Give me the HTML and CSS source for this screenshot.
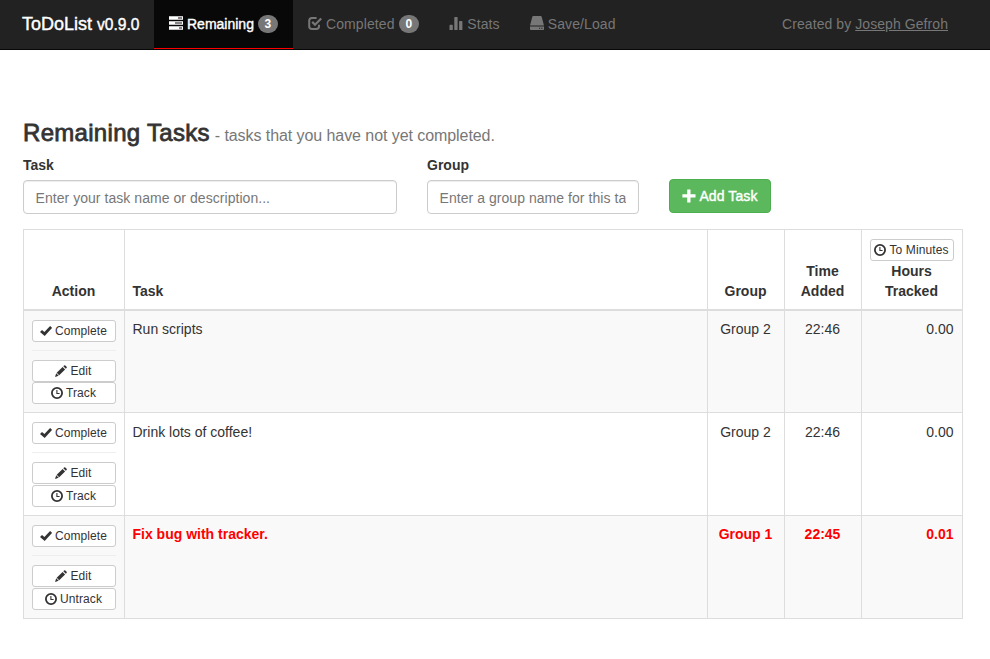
FILE: index.html
```html
<!DOCTYPE html>
<html lang="en">
<head>
<meta charset="utf-8">
<title>ToDoList</title>
<link rel="stylesheet" href="styles.css">
</head>
<body>
<svg class="defs" width="0" height="0" aria-hidden="true">
  <symbol id="tasks" viewBox="0 0 14 14"><path fill-rule="evenodd" d="M0 .3h14v3.400H0zM9 1.500v1h4v-1zM0 5.300h14v3.400H0zM6 6.500v1h7v-1zM0 10.300h14v3.400H0zM10 11.500v1h3v-1z"/></symbol>
  <symbol id="check" viewBox="0 0 14 14"><path fill="none" stroke="currentColor" stroke-width="2" d="M8.600 2H4Q1.200 2 1.200 4.800V10.200Q1.200 13 4 13H8.200Q11 13 11 10.200V8.800"/><path fill="none" stroke="currentColor" stroke-width="2.200" d="M4.200 5.900L7 8.700L13.200 2.500"/></symbol>
  <symbol id="stats" viewBox="0 0 14 14"><path d="M.5 9.500q0-.7.7-.7h1.900q.7 0 .7.7V14H.5zM5.300 1.700q0-.7.7-.7h1.900q.7 0 .7.7V14H5.300zM10.100 5.700q0-.7.7-.7h1.900q.7 0 .7.7V14h-3.300z"/></symbol>
  <symbol id="drive" viewBox="0 0 14 14"><path fill-rule="evenodd" d="M3.200 0h7.600q.6 0 .8.600L14 9.500H0L2.400.6Q2.600 0 3.200 0zM0 10.500h14v2.800q0 .7-.7.7H.7Q0 14 0 13.300zM9 11.700v1.100h1.200v-1.100zM11.300 11.700v1.100h1.200v-1.100z"/></symbol>
  <symbol id="plus" viewBox="0 0 14 14"><path d="M5.200.5h3.300v4.800h5v3.300h-5v4.900H5.200V8.600H.4V5.300h4.800z"/></symbol>
  <symbol id="ok" viewBox="0 0 12 12"><path d="M0 6.900L2 4.900L4.400 6.900L10.100.9L12.100 2.800L4.700 11z"/></symbol>
  <symbol id="pencil" viewBox="0 0 12 12"><path d="M9.100.4Q9.700-.1 10.300.4L11.600 1.700Q12.100 2.300 11.600 2.900L10.800 3.700L8.300 1.200zM7.600 1.900L10.100 4.400L4.200 10.200L1.700 7.700zM1.200 8.300L3.700 10.800L0 12z"/></symbol>
  <symbol id="clock" viewBox="0 0 12 12"><circle cx="6" cy="6" r="5.100" fill="none" stroke="currentColor" stroke-width="1.800"/><path fill="none" stroke="currentColor" stroke-width="1.100" d="M5.900 3v3.500h2.700"/></symbol>
</svg>
<nav class="navbar">
  <a class="brand">ToDoList <span class="version">v0.9.0</span></a>
  <a class="tab active"><svg><use href="#tasks"/></svg><span class="label">Remaining</span><span class="badge">3</span></a>
  <a class="tab"><svg><use href="#check"/></svg><span class="label">Completed</span><span class="badge">0</span></a>
  <a class="tab"><svg><use href="#stats"/></svg><span class="label">Stats</span></a>
  <a class="tab"><svg><use href="#drive"/></svg><span class="label">Save/Load</span></a>
  <p class="credit">Created by <a>Joseph Gefroh</a></p>
</nav>
<main>
  <h1>Remaining Tasks <small>- tasks that you have not yet completed.</small></h1>
  <form class="add-form">
    <div class="field task-field"><label for="t">Task</label><input id="t" placeholder="Enter your task name or description..."></div>
    <div class="field group-field"><label for="g">Group</label><input id="g" placeholder="Enter a group name for this task..."></div>
    <button type="button" class="add"><svg><use href="#plus"/></svg><span>Add Task</span></button>
  </form>
  <table>
    <colgroup><col class="c-action"><col><col class="c-small"><col class="c-small"><col class="c-action"></colgroup>
    <thead>
      <tr><th>Action</th><th class="left">Task</th><th>Group</th><th>Time Added</th><th><button type="button" class="xs"><svg><use href="#clock"/></svg><span>To Minutes</span></button>Hours Tracked</th></tr>
    </thead>
    <tbody>
      <tr class="odd first">
        <td><div class="actions"><button type="button" class="xs"><svg><use href="#ok"/></svg><span>Complete</span></button><hr><button type="button" class="xs"><svg><use href="#pencil"/></svg><span>Edit</span></button><button type="button" class="xs"><svg><use href="#clock"/></svg><span>Track</span></button></div></td>
        <td class="left">Run scripts</td><td>Group 2</td><td>22:46</td><td class="right">0.00</td>
      </tr>
      <tr class="second">
        <td><div class="actions"><button type="button" class="xs"><svg><use href="#ok"/></svg><span>Complete</span></button><hr><button type="button" class="xs"><svg><use href="#pencil"/></svg><span>Edit</span></button><button type="button" class="xs"><svg><use href="#clock"/></svg><span>Track</span></button></div></td>
        <td class="left">Drink lots of coffee!</td><td>Group 2</td><td>22:46</td><td class="right">0.00</td>
      </tr>
      <tr class="odd tracking">
        <td><div class="actions"><button type="button" class="xs"><svg><use href="#ok"/></svg><span>Complete</span></button><hr><button type="button" class="xs"><svg><use href="#pencil"/></svg><span>Edit</span></button><button type="button" class="xs"><svg><use href="#clock"/></svg><span>Untrack</span></button></div></td>
        <td class="left">Fix bug with tracker.</td><td>Group 1</td><td>22:45</td><td class="right">0.01</td>
      </tr>
    </tbody>
  </table>
</main>
</body>
</html>
```
FILE: styles.css
```css
* { box-sizing: border-box; }
body {
  margin: 0;
  background: #fff;
  color: #333;
  font: 14px/20px "Liberation Sans", Arial, sans-serif;
}
svg { fill: currentColor; flex: none; }
.defs { position: absolute; }

.navbar {
  display: flex;
  height: 50px;
  padding-left: 22px;
  padding-right: 42px;
  background: #222;
  border-bottom: 1px solid #080808;
  color: #777;
}
.brand {
  width: 132px;
  padding-top: 14px;
  color: #fff;
  font-size: 18px;
  white-space: nowrap;
  -webkit-text-stroke: .4px;
}
.version { font-size: 15.6px; }
.tab {
  display: flex;
  align-items: flex-start;
  height: 49px;
  padding: 14px 15px 0;
  white-space: nowrap;
}
.tab svg { width: 14px; height: 14px; margin: 2px 4px 0 0; }
.label { letter-spacing: .1px; }
.active {
  width: 139px;
  background: #080808;
  border-bottom: 1px solid #f00;
  color: #fff;
}
.active .label { letter-spacing: 0; -webkit-text-stroke: .4px; }
.badge {
  margin: 1px 0 0 4px;
  padding: 3px 7px;
  border-radius: 10px;
  background: #777;
  color: #fff;
  font-size: 12px;
  font-weight: bold;
  line-height: 12px;
}
.active .badge { padding: 3px 6.5px; }
.credit { margin: 14px 0 0 auto; letter-spacing: .07px; }
.credit a { text-decoration: underline; }

main { width: 940px; margin: 70px 0 0 23px; }
h1 {
  margin: 0;
  height: 35px;
  font-size: 24px;
  font-weight: normal;
  letter-spacing: .3px;
  line-height: 26px;
  white-space: nowrap;
  -webkit-text-stroke: .8px;
}
small { margin-left: -2px; font-size: 16px; letter-spacing: -.07px; color: #777; -webkit-text-stroke: 0; }
.add-form { display: flex; height: 74px; }
.field { display: flex; flex-direction: column; gap: 5px; margin-right: 30px; }
.task-field { width: 374px; }
.group-field { width: 212px; }
label { font-weight: bold; }
input {
  width: 100%;
  height: 34px;
  padding: 7px 12px 5px 11.5px;
  border: 1px solid #ccc;
  border-radius: 4px;
  box-shadow: inset 0 1px 1px rgba(0, 0, 0, .075);
  font: inherit;
  letter-spacing: .05px;
}
input::placeholder { color: #777; opacity: 1; }
.add {
  display: flex;
  align-items: center;
  justify-content: center;
  width: 102px;
  height: 34px;
  margin-top: 24px;
  padding: 0;
  border: 1px solid #4cae4c;
  border-radius: 4px;
  background: #5cb85c;
  color: #fff;
  font: inherit;
  letter-spacing: .1px;
  -webkit-text-stroke: .4px;
}
.add svg { width: 14px; height: 14px; margin-right: 3px; }

table {
  width: 940px;
  table-layout: fixed;
  border-collapse: collapse;
  border: 1px solid #ddd;
}
.c-action { width: 101px; }
.c-small { width: 77px; }
th, td { border: 1px solid #ddd; padding: 8px 8.5px 8px 7.5px; text-align: center; vertical-align: top; }
th { height: 80px; vertical-align: bottom; border-bottom-width: 2px; }
td { height: 103px; }
.first td { height: 102px; }
.second td { padding-top: 9px; padding-bottom: 7px; }
.left { text-align: left; }
.right { text-align: right; }
.odd { background: #f9f9f9; }
.tracking td { color: #f00; font-weight: bold; }
.actions { display: flex; flex-direction: column; padding-top: 1px; }
.second .actions { padding-top: 0; }
.actions .xs + .xs { margin-top: 1px; }
.first .actions .xs + .xs { margin-top: 0; }
hr { width: 100%; margin: 8px 0 9px; border: 0; border-top: 1px solid #eee; }
.xs {
  display: flex;
  align-items: center;
  justify-content: center;
  width: 84px;
  height: 22px;
  padding: 0;
  border: 1px solid #ccc;
  border-radius: 3px;
  background: #fff;
  color: #333;
  font: 12px/18px "Liberation Sans", Arial, sans-serif;
  letter-spacing: .1px;
  white-space: nowrap;
}
.xs svg { width: 12px; height: 12px; margin-right: 3px; }
```
